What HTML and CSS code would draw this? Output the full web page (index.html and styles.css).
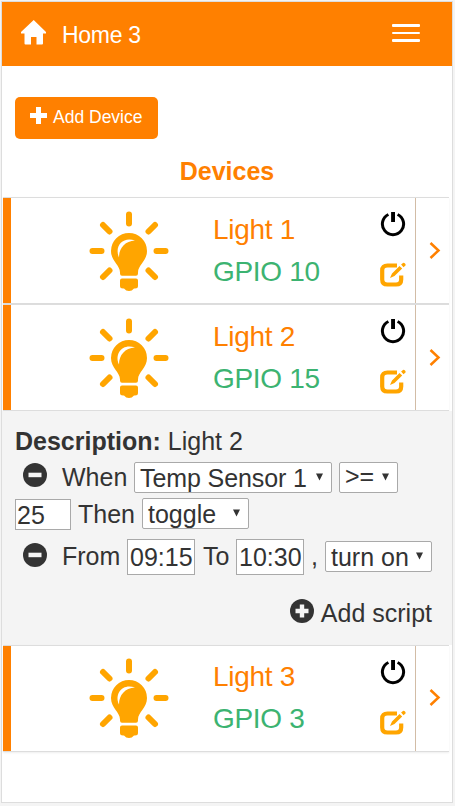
FILE: index.html
```html
<!DOCTYPE html>
<html lang="en">
<head>
<meta charset="utf-8">
<title>Home 3</title>
<link rel="stylesheet" href="styles.css">
</head>
<body>
<svg class="defs" width="0" height="0">
  <symbol id="bulb" viewBox="0 0 80 80">
    <g fill="none" stroke="#ffa500" stroke-width="6" stroke-linecap="round">
      <path d="M40 3.500V12.500M3.500 40H12.500M67.500 40H76.500M14 14L20.500 20.500M66 14L59.500 20.500M20.500 59.500L14 66M59.500 59.500L66 66"/>
    </g>
    <path fill="#ffa500" d="M40 22A18 18 0 0 0 22 40C22 50 31 54 31 61.500V62.500Q31 64.800 33 64.800H47Q49 64.800 49 62.500V61.500C49 54 58 50 58 40A18 18 0 0 0 40 22Z"/>
    <path fill="#ffa500" d="M33 67.500H47Q49 67.500 49 69.500V75Q49 77.500 46 77.500H45Q43 80 40 80T35 77.500H34Q31 77.500 31 75V69.500Q31 67.500 33 67.500Z"/>
    <path fill="#fff" d="M30 46.500C25 35 34 25 46 29.500C36 30 30 37 30 46.500Z"/>
  </symbol>
  <symbol id="power" viewBox="0 0 26 26">
    <path fill="none" stroke="#000" stroke-width="3" d="M8.400 3.500A10.600 10.600 0 1 0 17.600 3.500"/>
    <path fill="#000" d="M11.100 1h3.900v10h-3.900z"/>
  </symbol>
  <symbol id="edit" viewBox="0 0 26 26">
    <path fill="none" stroke="#ffa500" stroke-width="4.200" d="M17 3.500H7.500Q2.200 3.500 2.200 8.500V17.500Q2.200 22.500 7.500 22.500H16Q21.200 22.500 21.200 17.500V13.500"/>
    <path fill="#ffa500" d="M10 16L12 11.500L19.500 4L22.200 6.600L14.500 14ZM21.100 2.600L23 1Q24 .5 25 1.500T25.500 3.400L23.500 5.300Z"/>
  </symbol>
  <symbol id="minus" viewBox="0 0 24 24">
    <circle cx="12" cy="12" r="12" fill="#333"/><path fill="#f4f4f4" d="M5.500 9.700h13v4.500h-13z"/>
  </symbol>
</svg>
<div class="app">
  <header class="navbar">
    <svg class="home" viewBox="0 0 26 26" width="26" height="26"><path fill="#fff" d="M12.700 0L25 12V13.500H22V23.500Q22 24.500 21 24.500H15.500V17H10V24.500H4.500Q3.500 24.500 3.500 23.500V13.500H0V12Z"/></svg>
    <span class="brand">Home 3</span>
    <div class="burger"><i></i><i class="thin"></i><i></i></div>
  </header>
  <button class="add-device"><svg width="17" height="17" viewBox="0 0 17 17"><path fill="#fff" d="M6 0h5v6h6v5h-6v6H6v-6H0V6h6z"/></svg><span>Add Device</span></button>
  <h1>Devices</h1>

  <section class="card">
    <svg class="bulb"><use href="#bulb"/></svg>
    <div class="info"><span class="name">Light 1</span><span class="pin">GPIO 10</span></div>
    <div class="actions"><svg><use href="#power"/></svg><svg><use href="#edit"/></svg></div>
    <div class="more"><svg width="12" height="17" viewBox="0 0 12 17"><path fill="none" stroke="#ff8000" stroke-width="2.500" d="M1.500 1L9.500 8.500L1.500 16"/></svg></div>
  </section>
  <section class="card second">
    <svg class="bulb"><use href="#bulb"/></svg>
    <div class="info"><span class="name">Light 2</span><span class="pin">GPIO 15</span></div>
    <div class="actions"><svg><use href="#power"/></svg><svg><use href="#edit"/></svg></div>
    <div class="more"><svg width="12" height="17" viewBox="0 0 12 17"><path fill="none" stroke="#ff8000" stroke-width="2.500" d="M1.500 1L9.500 8.500L1.500 16"/></svg></div>
  </section>

  <section class="details">
    <div class="line"><b>Description:</b>&nbsp;Light 2</div>
    <div class="line rule">
      <svg class="round"><use href="#minus"/></svg><span class="when">When</span>
      <span class="select sensor">Temp Sensor 1<svg viewBox="0 0 8 8"><path d="M0 0h8L4 8z"/></svg></span>
      <span class="select compare">&gt;=<svg viewBox="0 0 8 8"><path d="M0 0h8L4 8z"/></svg></span>
    </div>
    <div class="line result">
      <span class="input value">25</span><span class="then">Then</span>
      <span class="select action">toggle<svg viewBox="0 0 8 8"><path d="M0 0h8L4 8z"/></svg></span>
    </div>
    <div class="line schedule">
      <svg class="round"><use href="#minus"/></svg><span class="from">From</span>
      <span class="input time">09:15</span><span class="to">To</span><span class="input time">10:30</span><span class="comma">,</span>
      <span class="select turn">turn on<svg viewBox="0 0 8 8"><path d="M0 0h8L4 8z"/></svg></span>
    </div>
    <div class="line add-script"><svg class="plus" viewBox="0 0 24 24"><circle cx="12" cy="12" r="12" fill="#333"/><path fill="#f4f4f4" d="M9.800 5.500h4.400v4.300h4.300v4.400h-4.300v4.300H9.800v-4.300H5.500V9.800h4.300z"/></svg>Add script</div>
  </section>

  <section class="card last">
    <svg class="bulb"><use href="#bulb"/></svg>
    <div class="info"><span class="name">Light 3</span><span class="pin">GPIO 3</span></div>
    <div class="actions"><svg><use href="#power"/></svg><svg><use href="#edit"/></svg></div>
    <div class="more"><svg width="12" height="17" viewBox="0 0 12 17"><path fill="none" stroke="#ff8000" stroke-width="2.500" d="M1.500 1L9.500 8.500L1.500 16"/></svg></div>
  </section>
</div>
</body>
</html>
```
FILE: styles.css
```css
* { box-sizing: border-box; }
html { background: #f4f4f4; }
body { margin: 0; padding: 1px; height: 806px; overflow: hidden; font-family: "Liberation Sans", Arial, sans-serif; color: #333; }
.defs { position: absolute; }
svg { display: block; flex: none; }
.app { width: 452px; height: 802px; background: #fff; border: 1px solid #ddd; display: flex; flex-direction: column; }
.navbar { height: 64px; flex: none; background: #ff8000; display: flex; align-items: flex-start; padding-left: 19px; color: #fff; }
.home { margin-top: 18px; }
.brand { margin: 17px 0 0 15px; font-size: 23px; line-height: 32px; letter-spacing: -.3px; }
.burger { margin: 22px 32px 0 auto; width: 28px; display: flex; flex-direction: column; gap: 5px; }
.burger i { height: 3px; background: #fff; border-radius: 1px; }
.burger .thin { height: 2px; }
.add-device { margin: 31px 0 0 13px; width: 143px; height: 42px; flex: none; border: 0; border-radius: 5px; background: #ff8000; color: #fff; font: 17.500px/40px "Liberation Sans", Arial, sans-serif; display: flex; align-items: flex-start; padding: 0 0 0 15px; }
.add-device svg { margin: 10px 6px 0 0; }
.add-device span { white-space: nowrap; }
h1 { margin: 14px 0 8px; font-size: 25px; line-height: 36px; text-align: center; color: #ff8000; }
.card { height: 107px; flex: none; margin: 0 3px 0 1px; border-top: 1px solid #ddd; border-bottom: 1px solid #ddd; background: linear-gradient(#ff8000, #ff8000) 0 0 / 8px 100% no-repeat #fff; background-clip: padding-box; display: flex; box-shadow: 0 1px 2px rgba(0,0,0,.07); }
.bulb { width: 80px; height: 80px; margin: 13px 0 0 86px; }
.info { width: 165px; padding: 11px 0 0 44px; display: flex; flex-direction: column; font-size: 28px; line-height: 42px; letter-spacing: -.3px; white-space: nowrap; }
.name { color: #ff8000; }
.pin { color: #3cb371; }
.actions { width: 81px; padding: 13px 0 0 46px; }
.actions svg { width: 26px; height: 26px; }
.actions svg + svg { margin-top: 25px; }
.more { flex: 1; border-left: 1px solid #d2bca6; padding: 44px 0 0 13px; }
.last .bulb { margin-top: 12px; }
.last .info { padding-top: 10px; }
.last .more { padding-top: 43px; }
.details { height: 234px; flex: none; background: #f4f4f4; padding: 12px 0 0 13px; font-size: 25px; }
.line { height: 36px; line-height: 36px; display: flex; align-items: center; white-space: nowrap; }
.round { width: 24px; height: 24px; margin: -5px 0 0 7.500px; }
.when { width: 72px; margin-left: 15.500px; }
.select, .input { background: #fff; border: 1px solid #a9a9a9; height: 31px; line-height: 30px; flex: none; }
.select { display: flex; justify-content: space-between; border-radius: 2px; padding: 0 8px 0 5px; }
.select svg { width: 7px; height: 8px; margin-top: 10px; fill: #333; }
.sensor { width: 198px; letter-spacing: -.1px; }
.compare { width: 59px; margin-left: 7px; line-height: 27px; }
.result { height: 37px; line-height: 37px; }
.value { width: 56px; padding-left: 1px; margin-top: 2px; }
.then { width: 64px; margin-left: 7px; padding-top: 1px; }
.action { width: 107px; }
.schedule { height: 48px; }
.schedule .round { margin-top: -3px; }
.from { width: 65px; margin-left: 15.500px; }
.time { width: 68px; height: 36px; line-height: 34px; padding-left: 2px; margin-top: 2px; }
.to { width: 33px; margin: 0 0 0 8px; }
.comma { width: 14px; margin-left: 7px; }
.turn { width: 107px; }
.add-script { margin-top: 15px; justify-content: flex-end; padding-right: 20px; }
.plus { width: 24px; height: 24px; margin: -5px 7px 0 0; }
```
